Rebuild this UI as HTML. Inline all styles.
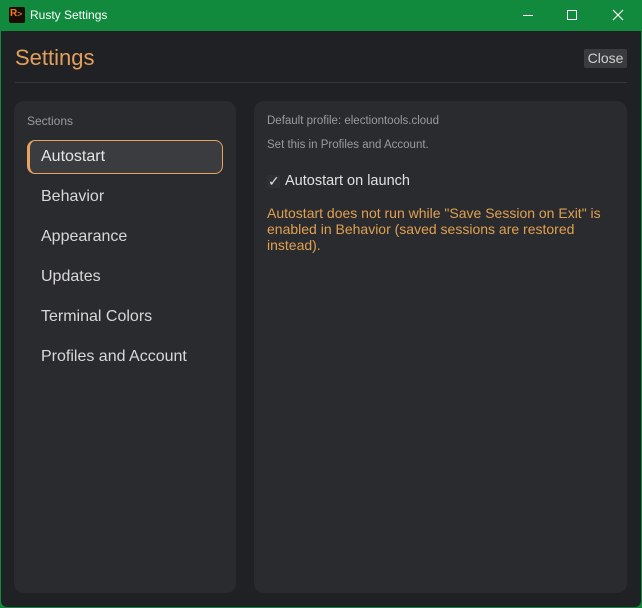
<!DOCTYPE html>
<html><head><meta charset="utf-8"><style>
*{margin:0;padding:0;box-sizing:border-box}
body{width:642px;height:608px;overflow:hidden;background:#118a3e;font-family:"Liberation Sans","DejaVu Sans",sans-serif;position:relative}
.win{position:absolute;left:1px;top:31px;width:640px;height:576px;background:#202124;border-radius:0 0 6px 6px}
.tb{position:absolute;left:0;top:0;width:642px;height:31px;color:#fff;font-size:12px}
.abs{position:absolute}
.panel{position:absolute;background:#2a2b2f;border-radius:10px}
.nav{position:absolute;left:41px;color:#d8d8d8;font-size:16px}
</style></head><body>
<div class="tb">
 <div class="abs" style="left:9px;top:7px;width:16px;height:16px;background:#1a0d08;border-radius:2px"><span style="position:absolute;left:1px;top:1px;font-size:10px;font-weight:bold;color:#f07a1a">R</span><span style="position:absolute;left:8px;top:2px;font-size:9px;color:#f0a040">&gt;</span></div>
 <div class="abs" style="left:30px;top:8px">Rusty Settings</div>
 <div class="abs" style="left:523px;top:15px;width:10px;height:1px;background:#fff"></div>
 <div class="abs" style="left:567px;top:10px;width:10px;height:10px;border:1px solid #fff"></div>
 <svg class="abs" style="left:612px;top:9px" width="12" height="12"><path d="M1 1L11 11M11 1L1 11" stroke="#fff" stroke-width="1.2"/></svg>
</div>
<div class="win"></div>
<div class="abs" style="left:15px;top:45px;color:#e3a05c;font-size:22px">Settings</div>
<div class="abs" style="left:584px;top:49px;width:43px;height:19px;background:#3a3b3e;border-radius:2px;color:#d0d0d0;font-size:14px;text-align:center;line-height:19px">Close</div>
<div class="abs" style="left:15px;top:82px;width:612px;height:1px;background:#36373a"></div>
<div class="panel" style="left:14px;top:101px;width:222px;height:492px"></div>
<div class="panel" style="left:254px;top:101px;width:373px;height:492px"></div>
<div class="abs" style="left:27px;top:114px;color:#9a9ba0;font-size:12px">Sections</div>
<div class="abs" style="left:27px;top:140px;width:196px;height:34px;background:#3b3c40;border:1px solid #e8a35e;border-left:3px solid #e8a35e;border-radius:8px"></div>
<div class="nav" style="top:148px;color:#e6e6e6">Autostart</div>
<div class="nav" style="top:188px">Behavior</div>
<div class="nav" style="top:228px">Appearance</div>
<div class="nav" style="top:268px">Updates</div>
<div class="nav" style="top:308px">Terminal Colors</div>
<div class="nav" style="top:348px">Profiles and Account</div>
<div class="abs" style="left:267px;top:115px;color:#9a9ba0;font-size:11.5px">Default profile: electiontools.cloud</div>
<div class="abs" style="left:267px;top:139px;color:#9a9ba0;font-size:11.5px">Set this in Profiles and Account.</div>
<div class="abs" style="left:267px;top:175px;width:13px;height:13px;background:#2f3034"></div>
<div class="abs" style="left:268px;top:173px;color:#e0e0e0;font-size:14px">✓</div>
<div class="abs" style="left:285px;top:173px;color:#e0e0e0;font-size:14.5px">Autostart on launch</div>
<div class="abs" style="left:267px;top:205px;width:345px;color:#e0a050;font-size:14px;line-height:16px">Autostart does not run while "Save Session on Exit" is enabled in Behavior (saved sessions are restored instead).</div>
</body></html>
